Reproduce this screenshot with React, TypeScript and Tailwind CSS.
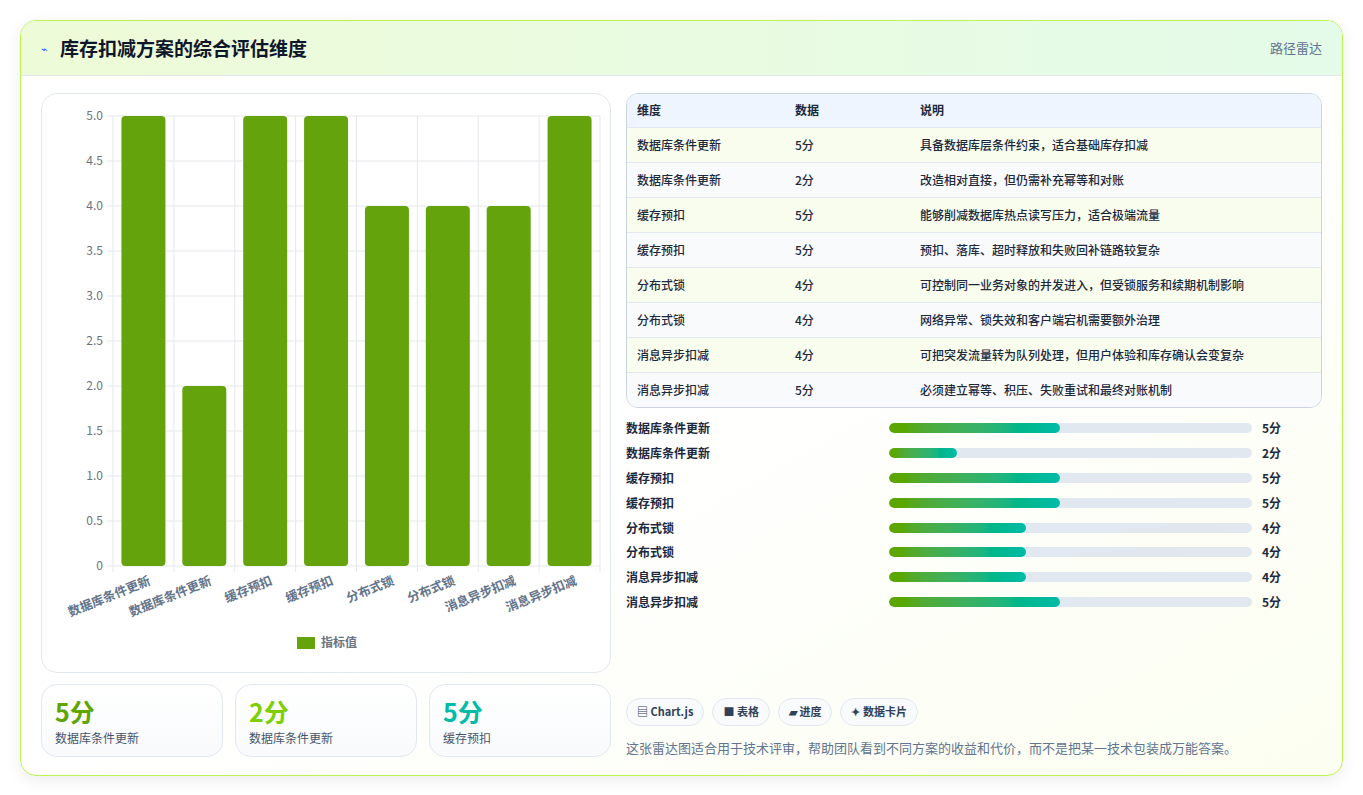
import React from 'react';

const font = { fontFamily: '"Noto Sans CJK SC", "Noto Sans", sans-serif' };

const rows = [
  { name: '数据库条件更新', score: 5, desc: '具备数据库层条件约束，适合基础库存扣减' },
  { name: '数据库条件更新', score: 2, desc: '改造相对直接，但仍需补充幂等和对账' },
  { name: '缓存预扣', score: 5, desc: '能够削减数据库热点读写压力，适合极端流量' },
  { name: '缓存预扣', score: 5, desc: '预扣、落库、超时释放和失败回补链路较复杂' },
  { name: '分布式锁', score: 4, desc: '可控制同一业务对象的并发进入，但受锁服务和续期机制影响' },
  { name: '分布式锁', score: 4, desc: '网络异常、锁失效和客户端宕机需要额外治理' },
  { name: '消息异步扣减', score: 4, desc: '可把突发流量转为队列处理，但用户体验和库存确认会变复杂' },
  { name: '消息异步扣减', score: 5, desc: '必须建立幂等、积压、失败重试和最终对账机制' },
];

function Chart() {
  // card-local coords: card at x40,y93
  const x0 = 71, x1 = 558, yTop = 22, yBot = 472;
  const step = (x1 - x0) / 8;
  const ticks = [0, 0.5, 1, 1.5, 2, 2.5, 3, 3.5, 4, 4.5, 5];
  return (
    <svg width="570" height="578" className="block">
      {ticks.map((t) => {
        const y = yBot - (t / 5) * (yBot - yTop);
        return (
          <g key={t}>
            <line x1={x0 - 6} x2={x1} y1={y} y2={y} stroke="#e5e7eb" />
            <text x={x0 - 10} y={y + 4} textAnchor="end" fontSize="12" fill="#6b7280">
              {t === 0 ? '0' : t.toFixed(1)}
            </text>
          </g>
        );
      })}
      {Array.from({ length: 9 }).map((_, i) => (
        <line key={i} x1={x0 + i * step} x2={x0 + i * step} y1={yTop} y2={yBot + 6} stroke="#e5e7eb" />
      ))}
      {rows.map((r, i) => {
        const h = (r.score / 5) * (yBot - yTop);
        const cx = x0 + i * step + step / 2;
        return (
          <g key={i}>
            <rect x={cx - 22} y={yBot - h} width="44" height={h} rx="4" fill="#65a30d" />
            <text
              x={cx + 8}
              y={yBot + 18}
              textAnchor="end"
              fontSize="12.5"
              fontWeight="600"
              fill="#64748b"
              transform={`rotate(-22 ${cx + 8} ${yBot + 18})`}
            >
              {r.name}
            </text>
          </g>
        );
      })}
      <rect x="255" y="543" width="18" height="12" fill="#65a30d" />
      <text x="279" y="553" fontSize="12" fontWeight="600" fill="#6b7280">指标值</text>
    </svg>
  );
}

export default function App() {
  return (
    <div className="min-h-[795px] bg-white p-5" style={font}>
      <div className="rounded-2xl border border-lime-300 bg-gradient-to-br from-white via-white to-[#fbfef0] shadow-[0_4px_16px_rgba(0,0,0,0.08)] overflow-hidden">
        <div className="h-[55px] flex items-center justify-between px-5 bg-gradient-to-r from-[#eefbd8] to-[#e4fbe9] border-b border-slate-200">
          <div className="flex items-center gap-3">
            <span className="text-blue-600 text-[11px]">⌁</span>
            <span className="text-[19px] font-bold text-slate-900">库存扣减方案的综合评估维度</span>
          </div>
          <span className="text-[13px] text-slate-500">路径雷达</span>
        </div>
        <div className="flex gap-[15px] px-5 pt-[17px] pb-[18px]">
          <div className="w-[570px] flex flex-col gap-[11px]">
            <div className="rounded-2xl border border-slate-200 bg-white">
              <Chart />
            </div>
            <div className="grid grid-cols-3 gap-3">
              {[
                { v: '5分', c: 'text-lime-600', l: '数据库条件更新' },
                { v: '2分', c: 'text-lime-500', l: '数据库条件更新' },
                { v: '5分', c: 'text-teal-500', l: '缓存预扣' },
              ].map((s, i) => (
                <div key={i} className="h-[73px] rounded-2xl border border-slate-200 bg-gradient-to-b from-white to-slate-50 px-[13px] pt-[8px]">
                  <div className={`text-[25px] font-bold leading-[36px] ${s.c}`}>{s.v}</div>
                  <div className="text-[12px] text-slate-600">{s.l}</div>
                </div>
              ))}
            </div>
          </div>
          <div className="flex-1 flex flex-col">
            <div className="rounded-xl border border-slate-300 overflow-hidden">
              <table className="w-full text-[12px] text-slate-800">
                <thead>
                  <tr className="bg-[#eef5fe] h-[33px] text-left text-slate-800">
                    <th className="pl-[10px] w-[168px] font-semibold">维度</th>
                    <th className="w-[125px] font-semibold">数据</th>
                    <th className="font-semibold">说明</th>
                  </tr>
                </thead>
                <tbody>
                  {rows.map((r, i) => (
                    <tr key={i} className={`h-[35px] border-t border-slate-200 ${i % 2 === 0 ? 'bg-[#f8fdee]' : 'bg-slate-50'}`}>
                      <td className="pl-[10px] font-medium">{r.name}</td>
                      <td className="font-medium">{r.score}分</td>
                      <td className="font-medium">{r.desc}</td>
                    </tr>
                  ))}
                </tbody>
              </table>
            </div>
            <div className="mt-[8px] flex flex-col">
              {rows.map((r, i) => (
                <div key={i} className="h-[24.8px] flex items-center text-[12px] font-semibold text-slate-800">
                  <div className="w-[263px]">{r.name}</div>
                  <div className="w-[363px] h-[10px] rounded-full bg-slate-200 overflow-hidden">
                    <div
                      className="h-full rounded-full bg-gradient-to-r from-lime-600 to-teal-500"
                      style={{ width: `${r.score * 9.42}%` }}
                    />
                  </div>
                  <div className="ml-[10px]">{r.score}分</div>
                </div>
              ))}
            </div>
            <div className="mt-auto flex gap-2 text-[11px] font-semibold text-slate-700">
              <span className="h-[28px] px-[10px] flex items-center rounded-full border border-slate-200 bg-slate-50">▤ Chart.js</span>
              <span className="h-[28px] px-[10px] flex items-center rounded-full border border-slate-200 bg-slate-50">■ 表格</span>
              <span className="h-[28px] px-[10px] flex items-center rounded-full border border-slate-200 bg-slate-50">▰ 进度</span>
              <span className="h-[28px] px-[10px] flex items-center rounded-full border border-slate-200 bg-slate-50">✦ 数据卡片</span>
            </div>
            <div className="mt-[12px] text-[13px] text-slate-500">
              这张雷达图适合用于技术评审，帮助团队看到不同方案的收益和代价，而不是把某一技术包装成万能答案。
            </div>
          </div>
        </div>
      </div>
    </div>
  );
}
